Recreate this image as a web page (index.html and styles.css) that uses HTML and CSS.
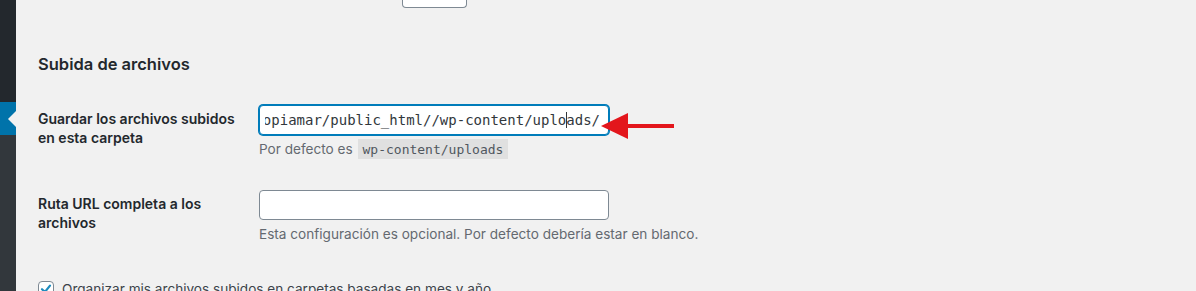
FILE: index.html
```html
<!DOCTYPE html>
<html lang="es">
<head>
  <meta charset="UTF-8" />
  <meta name="viewport" content="width=device-width, initial-scale=1.0"/>
  <title>Ajustes de medios</title>
  <link rel="stylesheet" href="styles.css">
</head>
<body>
  <div class="wrap">
    <div class="sidebar">
      <div class="menu-top"></div>
      <div class="menu-current"><span class="menu-arrow"></span></div>
      <div class="submenu"></div>
    </div>

    <div class="content">
      <div class="prev-field"></div>

      <h2>Subida de archivos</h2>

      <table class="form-table">
        <tr>
          <th><label for="upload_path">Guardar los archivos subidos en esta carpeta</label></th>
          <td>
            <div class="field">
              <!-- campo con foco: el texto se ve desplazado hasta el final -->
              <div id="upload_path" class="regular-text code is-focus" role="textbox">
                <div class="scroller">
                  <span class="value">/home/copiamar/public_html//wp-content/uplo</span><span class="caret"></span><span class="value">ads/</span>
                </div>
              </div>
              <svg class="annot-arrow" width="76" height="28" viewBox="0 0 76 28">
                <polygon points="0,13 27,0 27,26" fill="#e3161c" />
                <rect x="26" y="11" width="47" height="4" fill="#e3161c" />
              </svg>
            </div>
            <p class="description">Por defecto es <code>wp-content/uploads</code></p>
          </td>
        </tr>
        <tr>
          <th><label for="upload_url_path">Ruta URL completa a los archivos</label></th>
          <td>
            <input type="text" id="upload_url_path" class="regular-text code" value="" />
            <p class="description">Esta configuración es opcional. Por defecto debería estar en blanco.</p>
          </td>
        </tr>
        <tr>
          <td colspan="2" class="td-full">
            <label class="check">
              <span class="checkbox">
                <svg width="14" height="14" viewBox="0 0 14 14"><path d="M3 7.2 L5.9 10 L11 3.6" fill="none" stroke="#1e8cbe" stroke-width="2.2" stroke-linecap="round" stroke-linejoin="round"/></svg>
              </span>
              Organizar mis archivos subidos en carpetas basadas en mes y año.
            </label>
          </td>
        </tr>
      </table>
    </div>
  </div>
</body>
</html>
```

FILE: styles.css
```css
html, body {
  margin: 0;
  height: 100%;
}

body {
  font-family: Inter, "Noto Sans", sans-serif;
  background-color: #f1f1f1;
  color: #23282d;
  overflow: hidden;
}

.wrap {
  display: flex;
  height: 291px;
}

.sidebar {
  width: 16px;
  display: flex;
  flex-direction: column;
  flex-shrink: 0;
}

.menu-top {
  height: 102px;
  background-color: #23282d;
}

.menu-current {
  height: 33px;
  background-color: #0073aa;
  position: relative;
}

.menu-arrow {
  position: absolute;
  right: 0;
  top: 50%;
  margin-top: -8px;
  border: 8px solid transparent;
  border-left-width: 0;
  border-right-color: #f1f1f1;
}

.submenu {
  flex: 1;
  background-color: #32373c;
}

.content {
  flex: 1;
  padding-left: 22px;
}

.prev-field {
  margin-left: 364px;
  width: 65px;
  height: 8px;
  box-sizing: border-box;
  background-color: white;
  border: 1px solid #7e8993;
  border-top: none;
  border-radius: 0 0 4px 4px;
}

h2 {
  font-size: 16.5px;
  font-weight: 600;
  line-height: 22px;
  margin: 45px 0 15px;
  color: #23282d;
}

.form-table {
  border-collapse: collapse;
  width: 100%;
}

.form-table th {
  width: 201px;
  padding: 20px 10px 20px 0;
  text-align: left;
  vertical-align: top;
  font-size: 14px;
  font-weight: 600;
  line-height: 1.35;
  color: #23282d;
}

.form-table td {
  padding: 15px 10px;
  vertical-align: top;
}

.field {
  position: relative;
  width: 350px;
}

.regular-text {
  display: block;
  width: 350px;
  height: 30px;
  box-sizing: border-box;
  margin: 0;
  padding: 0 8px;
  background-color: white;
  border: 1px solid #7e8993;
  border-radius: 4px;
  color: #32373c;
  outline: none;
}

.code {
  font-family: "DejaVu Sans Mono", "Liberation Mono", monospace;
  font-size: 14px;
}

.is-focus {
  display: flex;
  padding-left: 5px;
  border-color: #007cba;
  box-shadow: 0 0 0 1px #007cba;
}

.scroller {
  flex: 1;
  display: flex;
  align-items: center;
  justify-content: flex-end;
  overflow: hidden;
  white-space: nowrap;
}

.value {
  flex-shrink: 0;
}

.caret {
  flex-shrink: 0;
  width: 1px;
  height: 16px;
  margin-right: -1px;
  background-color: #32373c;
}

.annot-arrow {
  position: absolute;
  left: 342px;
  top: 8px;
}

.description {
  margin: 4px 0 0;
  font-size: 13.6px;
  line-height: 20px;
  color: #646970;
}

code {
  font-family: "DejaVu Sans Mono", "Liberation Mono", monospace;
  font-size: 13px;
  padding: 3px 5px 2px;
  margin: 0 1px;
  background-color: rgba(0,0,0,0.07);
  color: #50575e;
}

.form-table td.td-full {
  padding: 22px 0 0;
}

.check {
  display: flex;
  align-items: center;
  gap: 8px;
  font-size: 13.6px;
  color: #3c434a;
}

.checkbox {
  width: 16px;
  height: 16px;
  box-sizing: border-box;
  border: 1px solid #7e8993;
  border-radius: 4px;
  background-color: white;
  display: flex;
  align-items: center;
  justify-content: center;
}
```
